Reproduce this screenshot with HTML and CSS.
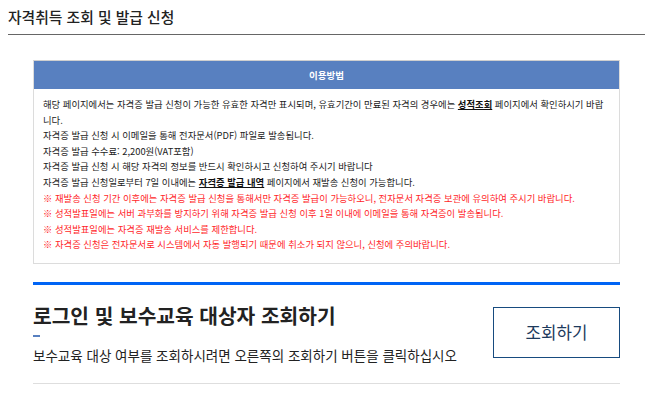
FILE: index.html
```html
<!DOCTYPE html>
<html lang="ko">
<head>
<meta charset="utf-8">
<link rel="stylesheet" href="styles.css">
</head>
<body>
<div class="page">
  <h1 class="title">자격취득 조회 및 발급 신청</h1>
  <div class="inner">
    <div class="guide">
      <div class="guide-head">이용방법</div>
      <div class="guide-body">
        <p>해당 페이지에서는 자격증 발급 신청이 가능한 유효한 자격만 표시되며, 유효기간이 만료된 자격의 경우에는 <a class="link">성적조회</a> 페이지에서 확인하시기 바랍<br>니다.</p>
        <p>자격증 발급 신청 시 이메일을 통해 전자문서(PDF) 파일로 발송됩니다.</p>
        <p>자격증 발급 수수료: 2,200원(VAT포함)</p>
        <p>자격증 발급 신청 시 해당 자격의 정보를 반드시 확인하시고 신청하여 주시기 바랍니다</p>
        <p>자격증 발급 신청일로부터 7일 이내에는 <a class="link">자격증 발급 내역</a> 페이지에서 재발송 신청이 가능합니다.</p>
        <p class="warn">※ 재발송 신청 기간 이후에는 자격증 발급 신청을 통해서만 자격증 발급이 가능하오니, 전자문서 자격증 보관에 유의하여 주시기 바랍니다.</p>
        <p class="warn">※ 성적발표일에는 서버 과부화를 방지하기 위해 자격증 발급 신청 이후 1일 이내에 이메일을 통해 자격증이 발송됩니다.</p>
        <p class="warn">※ 성적발표일에는 자격증 재발송 서비스를 제한합니다.</p>
        <p class="warn">※ 자격증 신청은 전자문서로 시스템에서 자동 발행되기 때문에 취소가 되지 않으니, 신청에 주의바랍니다.</p>
      </div>
    </div>
    <div class="lookup">
      <div class="lookup-text">
        <h2 class="lookup-title">로그인 및 보수교육 대상자 조회하기</h2>
        <span class="dash"></span>
        <p class="lookup-desc">보수교육 대상 여부를 조회하시려면 오른쪽의 조회하기 버튼을 클릭하십시오</p>
      </div>
      <button class="lookup-btn" type="button">조회하기</button>
    </div>
  </div>
</div>
</body>
</html>
```
FILE: styles.css
```css
html, body {
  margin: 0;
  padding: 0;
  background: #fff;
}
body {
  font-family: "Noto Sans CJK KR", "Noto Sans", sans-serif;
  color: #222;
}
.page {
  padding: 0 2px 0 8px;
}
.title {
  margin: 6px 0 0 0;
  padding-bottom: 7px;
  font-size: 14.8px;
  line-height: 21px;
  font-weight: 500;
  color: #222;
  border-bottom: 1px solid #666;
}
.inner {
  padding: 0 25px;
}
.guide {
  margin-top: 25px;
  border: 1px solid #dcdcdc;
  border-top-color: #cfcfcf;
}
.guide-head {
  height: 28px;
  line-height: 28px;
  background: #5880c0;
  color: #fff;
  font-size: 9.5px;
  font-weight: 700;
  text-align: center;
}
.guide-body {
  padding: 8px 12px 10px 9px;
  font-size: 9.35px;
  line-height: 15.6px;
  color: #222;
}
.guide-body p {
  margin: 0;
}
.link {
  color: #111;
  font-weight: 700;
  text-decoration: underline;
}
.warn {
  color: #ff1f2a;
}
.lookup {
  margin-top: 18px;
  border-top: 3px solid #0064f5;
  padding: 18px 0 19px 0;
  border-bottom: 1px solid #dedede;
  display: flex;
  justify-content: space-between;
  align-items: center;
}
.lookup-text {
  display: flex;
  flex-direction: column;
}
.lookup-title {
  margin: 0;
  font-size: 20.3px;
  line-height: 24px;
  font-weight: 700;
  color: #222;
}
.dash {
  display: block;
  width: 7px;
  height: 2px;
  margin-top: 8px;
  background: #5880c0;
}
.lookup-desc {
  margin: 9px 0 0 0;
  font-size: 13.5px;
  line-height: 18px;
  color: #222;
}
.lookup-btn {
  width: 127px;
  height: 51px;
  border: 1px solid #174b7f;
  background: #fff;
  color: #1d3a5c;
  font-family: "Noto Sans CJK KR", "Noto Sans", sans-serif;
  font-size: 16.8px;
  font-weight: 400;
  padding: 0;
  margin-top: -2px;
}
```
